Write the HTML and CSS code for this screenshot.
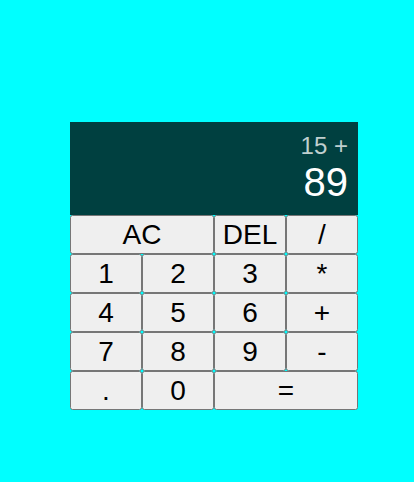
FILE: index.html
```html
<!DOCTYPE html>
<html>
<head>
<meta charset="utf-8">
<link rel="stylesheet" href="styles.css">
</head>
<body>
<div class="page">
  <div class="calculator-grid">
    <div class="output">
      <div class="previous-operand">15 +</div>
      <div class="current-operand">89</div>
    </div>
    <button class="key span-two">AC</button>
    <button class="key">DEL</button>
    <button class="key">/</button>
    <button class="key">1</button>
    <button class="key">2</button>
    <button class="key">3</button>
    <button class="key">*</button>
    <button class="key">4</button>
    <button class="key">5</button>
    <button class="key">6</button>
    <button class="key">+</button>
    <button class="key">7</button>
    <button class="key">8</button>
    <button class="key">9</button>
    <button class="key">-</button>
    <button class="key">.</button>
    <button class="key">0</button>
    <button class="key span-two">=</button>
  </div>
</div>
</body>
</html>
```
FILE: styles.css
```css
html, body {
  margin: 0;
  padding: 0;
  background: #00ffff;
  font-family: "Liberation Sans", Arial, sans-serif;
}
.page {
  padding: 122px 0 0 70px;
  height: 482px;
  box-sizing: border-box;
}
.calculator-grid {
  display: grid;
  grid-template-columns: repeat(4, 72px);
  grid-template-rows: 93px repeat(5, 39px);
}
.output {
  grid-column: 1 / -1;
  background-color: rgba(0, 0, 0, 0.75);
  display: flex;
  flex-direction: column;
  align-items: flex-end;
  justify-content: space-around;
  padding: 10px;
  box-sizing: border-box;
}
.previous-operand {
  color: rgba(255, 255, 255, 0.75);
  font-size: 24px;
}
.current-operand {
  color: #fff;
  font-size: 40px;
}
.key {
  font-family: "Liberation Sans", Arial, sans-serif;
  font-size: 28px;
  padding: 0;
  margin: 0;
}
.span-two {
  grid-column: span 2;
}
```
